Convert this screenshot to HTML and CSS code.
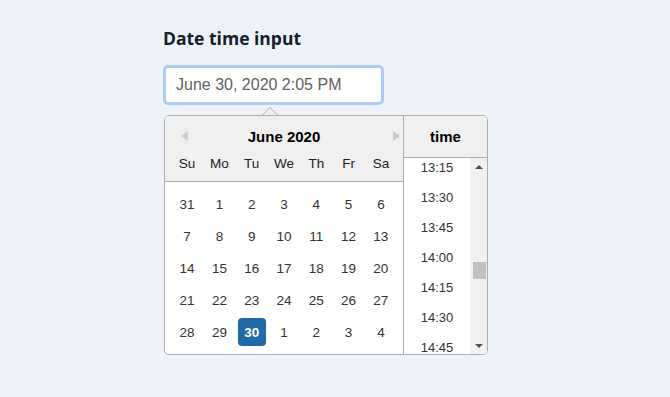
FILE: index.html
```html
<!DOCTYPE html>
<html lang="en">
<head>
<meta charset="utf-8">
<title>Date time input</title>
<link rel="stylesheet" href="styles.css">
</head>
<body>
<main class="page">
  <h1 class="title">Date time input</h1>
  <div class="input">June 30, 2020 2:05 PM</div>
  <div class="popper">
    <span class="notch"></span>
    <div class="calendar">
      <div class="month-col">
        <div class="month-header">
          <div class="title-row">
            <span class="nav nav-prev"></span>
            <span class="current-month">June 2020</span>
            <span class="nav nav-next"></span>
          </div>
          <div class="grid day-names">
            <span>Su</span><span>Mo</span><span>Tu</span><span>We</span><span>Th</span><span>Fr</span><span>Sa</span>
          </div>
        </div>
        <div class="grid days">
          <span>31</span><span>1</span><span>2</span><span>3</span><span>4</span><span>5</span><span>6</span>
          <span>7</span><span>8</span><span>9</span><span>10</span><span>11</span><span>12</span><span>13</span>
          <span>14</span><span>15</span><span>16</span><span>17</span><span>18</span><span>19</span><span>20</span>
          <span>21</span><span>22</span><span>23</span><span>24</span><span>25</span><span>26</span><span>27</span>
          <span>28</span><span>29</span><span class="selected">30</span><span>1</span><span>2</span><span>3</span><span>4</span>
        </div>
      </div>
      <div class="time-col">
        <div class="time-header">time</div>
        <div class="time-body">
          <ul class="time-list">
            <li>13:15</li><li>13:30</li><li>13:45</li><li>14:00</li><li>14:15</li><li>14:30</li><li>14:45</li>
          </ul>
          <div class="scrollbar">
            <span class="sb-arrow sb-up"></span>
            <div class="sb-track"><span class="sb-thumb"></span></div>
            <span class="sb-arrow sb-down"></span>
          </div>
        </div>
      </div>
    </div>
  </div>
</main>
</body>
</html>
```

FILE: styles.css
```css
* { box-sizing: border-box; }
html, body { margin: 0; padding: 0; }
body {
  background: #edf3f8;
  font-family: "Liberation Sans", Arial, sans-serif;
  width: 670px;
  height: 397px;
  overflow: hidden;
}
.page {
  padding: 26px 0 0 163px;
  display: flex;
  flex-direction: column;
  align-items: flex-start;
}
.title {
  margin: 0;
  font-family: "Open Sans", "Noto Sans", sans-serif;
  font-weight: 700;
  font-size: 17.5px;
  line-height: 24px;
  color: #14202e;
}
.input {
  margin-top: 15px;
  width: 221px;
  height: 40px;
  border: 3px solid #abcdf1;
  border-radius: 5px;
  background: #fff;
  padding-left: 10px;
  display: flex;
  align-items: center;
  font-size: 16px;
  color: #5f5f5f;
}
.popper {
  position: relative;
  margin-top: 10px;
  margin-left: 1px;
}
.notch {
  position: absolute;
  top: -8px;
  left: 98px;
  width: 0;
  height: 0;
  border-left: 8px solid transparent;
  border-right: 8px solid transparent;
  border-bottom: 8px solid #aeaeae;
}
.notch::after {
  content: "";
  position: absolute;
  left: -7px;
  top: 1px;
  border-left: 7px solid transparent;
  border-right: 7px solid transparent;
  border-bottom: 7px solid #f0f0f0;
}
.calendar {
  display: flex;
  border: 1px solid #aeaeae;
  border-radius: 5px;
  background: #fff;
  color: #333;
  font-size: 13px;
}
.month-col { width: 238px; }
.month-header {
  background: #f0f0f0;
  border-bottom: 1px solid #aeaeae;
  border-top-left-radius: 4px;
  padding: 10px 0 4px;
}
.title-row {
  display: grid;
  grid-template-columns: 1fr auto 1fr;
  align-items: center;
  height: 20px;
  padding: 0 3px;
}
.current-month {
  font-weight: 700;
  font-size: 15px;
  color: #000;
}
.nav {
  width: 0;
  height: 0;
  border-top: 5px solid transparent;
  border-bottom: 5px solid transparent;
}
.nav-prev { border-right: 7px solid #ccc; justify-self: start; margin-left: 13px; }
.nav-next { border-left: 7px solid #ccc; justify-self: end; }
.grid {
  display: grid;
  grid-template-columns: repeat(7, 32.3px);
  justify-content: center;
}
.grid span {
  display: flex;
  align-items: center;
  justify-content: center;
}
.day-names {
  margin-top: 4px;
  color: #222;
}
.day-names span { height: 27px; font-size: 13.5px; }
.days {
  padding: 6px 0;
  grid-auto-rows: 32.1px;
  font-size: 13.5px;
}
.days span { margin: 2.1px 2.15px; border-radius: 4px; }
.days .selected {
  background: #216ba5;
  color: #fff;
  font-weight: 700;
}
.time-col {
  width: 84px;
  border-left: 1px solid #aeaeae;
  display: flex;
  flex-direction: column;
}
.time-header {
  height: 42px;
  background: #f0f0f0;
  border-bottom: 1px solid #aeaeae;
  border-top-right-radius: 4px;
  display: flex;
  align-items: center;
  justify-content: center;
  font-weight: 700;
  font-size: 15px;
  color: #000;
}
.time-body {
  flex: 1 1 auto;
  height: 0;
  display: flex;
  overflow: hidden;
  border-bottom-right-radius: 4px;
}
.time-list {
  flex: 1;
  list-style: none;
  margin: -6px 0 0;
  padding: 0;
}
.time-list li {
  height: 30px;
  display: flex;
  align-items: center;
  justify-content: center;
  font-size: 13px;
  color: #333;
}
.scrollbar {
  width: 17px;
  background: #f1f1f1;
  display: flex;
  flex-direction: column;
  align-items: center;
}
.sb-arrow {
  height: 17px;
  width: 17px;
  display: flex;
  align-items: center;
  justify-content: center;
}
.sb-arrow::before {
  content: "";
  width: 0;
  height: 0;
  border-left: 4px solid transparent;
  border-right: 4px solid transparent;
}
.sb-up::before { border-bottom: 4px solid #505050; }
.sb-down::before { border-top: 4px solid #505050; }
.sb-track {
  flex: 1;
  width: 100%;
  display: flex;
  flex-direction: column;
  padding: 87px 1px 0 3px;
}
.sb-thumb {
  display: block;
  height: 17px;
  background: #c1c1c1;
}
```
